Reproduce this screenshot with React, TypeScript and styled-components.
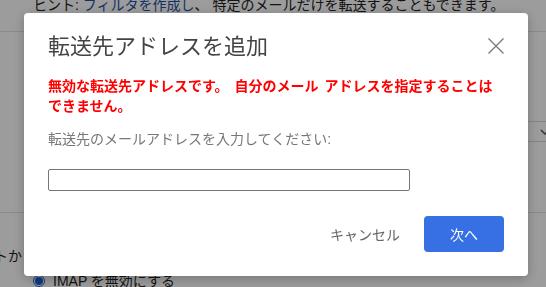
import React from "react";
import styled, { createGlobalStyle } from "styled-components";

const GlobalStyle = createGlobalStyle`
  html, body {
    margin: 0;
    padding: 0;
    background: #fff;
    overflow: hidden;
  }
  body {
    font-family: "Liberation Sans", "Noto Sans CJK JP", sans-serif;
    color: #222;
  }
`;

// page behind the dialog
const Page = styled.div`
  margin-top: -5px;
  width: 546px;
  height: 300px;
  overflow: hidden;
`;

const TipRow = styled.div`
  height: 37px;
  padding-left: 33px;
  font-size: 14px;
  line-height: 20px;
  white-space: nowrap;
  border-bottom: 1px solid #e4e4e4;
  box-sizing: border-box;
`;

const TipLink = styled.span`
  color: #2350a8;
`;

const Section = styled.div<{ h: number }>`
  height: ${(p) => p.h}px;
  box-sizing: border-box;
  border-bottom: 1px solid #e4e4e4;
  display: flex;
  flex-direction: column;
`;

const SelectBox = styled.div`
  align-self: flex-end;
  margin-top: 89px;
  margin-right: -6px;
  width: 260px;
  height: 21px;
  box-sizing: border-box;
  border-top: 1px solid #dadada;
  border-bottom: 1px solid #dadada;
  display: flex;
  justify-content: flex-end;
  align-items: center;
  padding-right: 2px;
`;

const Chevron = () => (
  <svg width="10" height="6" viewBox="0 0 10 6">
    <path d="M1 1 L5 5 L9 1" stroke="#555" strokeWidth="1.5" fill="none" />
  </svg>
);

const LowerArea = styled.div`
  display: flex;
  flex-direction: column;
`;

const NoteLine = styled.div`
  margin-top: 33px;
  margin-left: -6px;
  font-size: 14px;
  line-height: 20px;
  white-space: nowrap;
`;

const RadioRow = styled.div`
  margin-top: 5px;
  padding-left: 33px;
  display: flex;
  align-items: center;
  gap: 8px;
  font-size: 14px;
  line-height: 20px;
  white-space: nowrap;
`;

const RadioDot = styled.span`
  width: 12px;
  height: 12px;
  border-radius: 50%;
  border: 1px solid #1a5fd6;
  box-sizing: border-box;
  display: flex;
  align-items: center;
  justify-content: center;
  &::after {
    content: "";
    width: 8px;
    height: 8px;
    border-radius: 50%;
    background: #1a5fd6;
  }
`;

// modal
const Overlay = styled.div`
  position: fixed;
  inset: 0;
  background: rgba(0, 0, 0, 0.39);
  display: flex;
  align-items: flex-start;
  justify-content: flex-start;
`;

const Dialog = styled.div`
  margin: 13px 0 0 24px;
  width: 504px;
  box-sizing: border-box;
  padding: 20px 24px 24px 24px;
  background: #fff;
  border-radius: 4px;
  box-shadow: 0 3px 12px rgba(0, 0, 0, 0.25);
  font-family: "Liberation Sans", "Noto Sans CJK JP", sans-serif;
`;

const Header = styled.div`
  display: flex;
  justify-content: space-between;
  align-items: flex-start;
`;

const Title = styled.h2`
  margin: 0;
  font-size: 22px;
  line-height: 28px;
  font-weight: 400;
  color: #444;
`;

const CloseButton = styled.button`
  margin-top: 5px;
  width: 16px;
  height: 16px;
  padding: 0;
  border: none;
  background: none;
  display: flex;
  cursor: pointer;
`;

const ErrorText = styled.p`
  margin: 15px 0 0;
  font-size: 14px;
  line-height: 20px;
  font-weight: 700;
  color: #ff0000;
  word-spacing: 2px;
`;

const Label = styled.p`
  margin: 13px 0 0;
  font-size: 14px;
  line-height: 20px;
  color: #777;
`;

const EmailInput = styled.input`
  display: block;
  margin-top: 20px;
  width: 362px;
  height: 22px;
  box-sizing: border-box;
  border: 1px solid #767676;
  border-radius: 2px;
  padding: 0 4px;
  font-size: 14px;
  outline: none;
`;

const Footer = styled.div`
  margin-top: 25px;
  display: flex;
  justify-content: flex-end;
  gap: 12px;
`;

const Button = styled.button<{ primary?: boolean }>`
  height: 36px;
  min-width: ${(p) => (p.primary ? "80px" : "auto")};
  padding: 0 12px;
  border: none;
  border-radius: 4px;
  font-family: inherit;
  font-size: 14px;
  background: ${(p) => (p.primary ? "#3670e4" : "transparent")};
  color: ${(p) => (p.primary ? "#fff" : "#666")};
  cursor: pointer;
`;

const CloseIcon = () => (
  <svg width="16" height="16" viewBox="0 0 16 16">
    <path d="M0.5 0.5 L15.5 15.5 M15.5 0.5 L0.5 15.5" stroke="#7a7a7a" strokeWidth="1.4" fill="none" />
  </svg>
);

export default function App() {
  return (
    <>
      <GlobalStyle />
      <Page>
        <TipRow>
          ヒント: <TipLink>フィルタを作成し</TipLink>、 特定のメールだけを転送することもできます。
        </TipRow>
        <Section h={181}>
          <SelectBox>
            <Chevron />
          </SelectBox>
        </Section>
        <LowerArea>
          <NoteLine>トから Gmail にアクセスする場合</NoteLine>
          <RadioRow>
            <RadioDot />
            IMAP を無効にする
          </RadioRow>
        </LowerArea>
      </Page>
      <Overlay>
        <Dialog role="dialog">
          <Header>
            <Title>転送先アドレスを追加</Title>
            <CloseButton aria-label="閉じる">
              <CloseIcon />
            </CloseButton>
          </Header>
          <ErrorText>
            無効な転送先アドレスです。 自分のメール アドレスを指定することはできません。
          </ErrorText>
          <Label>転送先のメールアドレスを入力してください:</Label>
          <EmailInput type="text" />
          <Footer>
            <Button>キャンセル</Button>
            <Button primary>次へ</Button>
          </Footer>
        </Dialog>
      </Overlay>
    </>
  );
}
